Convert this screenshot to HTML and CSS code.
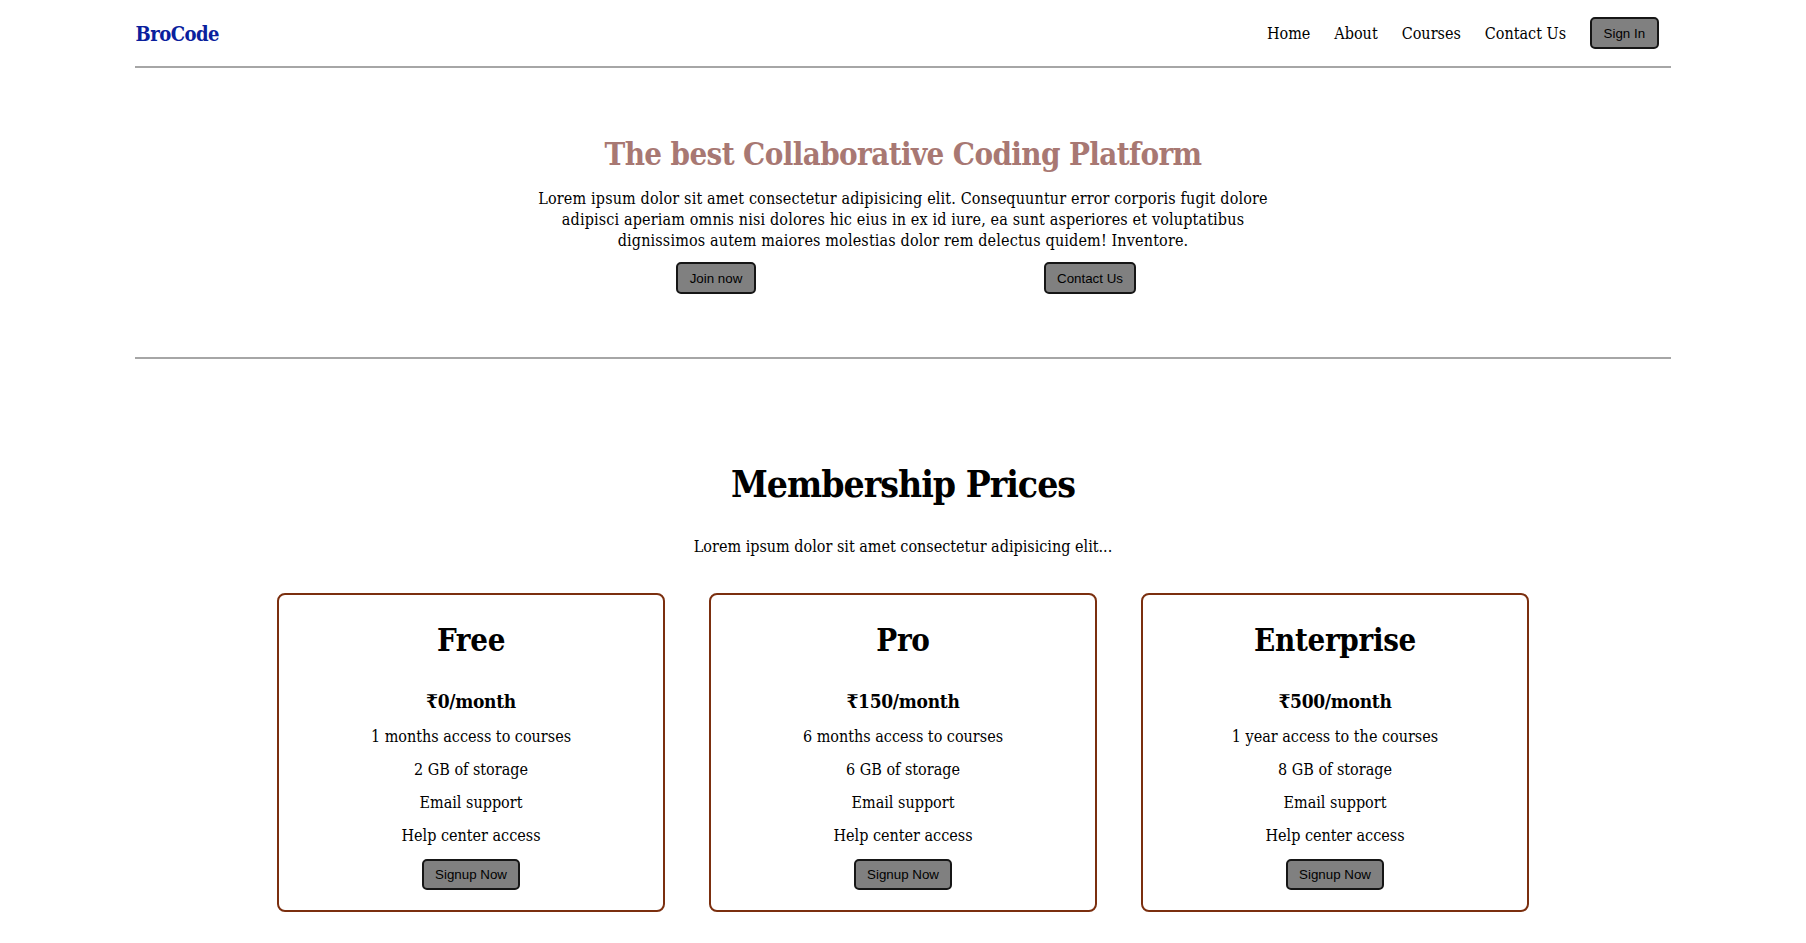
FILE: index.html
```html
<!DOCTYPE html>
<html lang="en">
<head>
<meta charset="utf-8">
<title>BroCode</title>
<link rel="stylesheet" href="styles.css">
</head>
<body>
<div class="container">
  <header class="header">
    <div class="logo">BroCode</div>
    <nav class="nav">
      <a href="#">Home</a>
      <a href="#">About</a>
      <a href="#">Courses</a>
      <a href="#">Contact Us</a>
      <button class="btn">Sign In</button>
    </nav>
  </header>

  <section class="hero">
    <h1>The best Collaborative Coding Platform</h1>
    <p>Lorem ipsum dolor sit amet consectetur adipisicing elit. Consequuntur error corporis fugit dolore adipisci aperiam omnis nisi dolores hic eius in ex id iure, ea sunt asperiores et voluptatibus dignissimos autem maiores molestias dolor rem delectus quidem! Inventore.</p>
    <div class="hero-actions">
      <button class="btn">Join now</button>
      <button class="btn">Contact Us</button>
    </div>
  </section>

  <section class="pricing">
    <h2>Membership Prices</h2>
    <p class="lead">Lorem ipsum dolor sit amet consectetur adipisicing elit...</p>
    <div class="cards">
      <div class="card">
        <h3>Free</h3>
        <p class="price">₹0/month</p>
        <ul>
          <li>1 months access to courses</li>
          <li>2 GB of storage</li>
          <li>Email support</li>
          <li>Help center access</li>
        </ul>
        <button class="btn card-btn">Signup Now</button>
      </div>
      <div class="card">
        <h3>Pro</h3>
        <p class="price">₹150/month</p>
        <ul>
          <li>6 months access to courses</li>
          <li>6 GB of storage</li>
          <li>Email support</li>
          <li>Help center access</li>
        </ul>
        <button class="btn card-btn">Signup Now</button>
      </div>
      <div class="card">
        <h3>Enterprise</h3>
        <p class="price">₹500/month</p>
        <ul>
          <li>1 year access to the courses</li>
          <li>8 GB of storage</li>
          <li>Email support</li>
          <li>Help center access</li>
        </ul>
        <button class="btn card-btn">Signup Now</button>
      </div>
    </div>
  </section>
</div>
</body>
</html>
```
FILE: styles.css
```css
body {
  margin: 0;
  font-family: "DejaVu Serif", serif;
  font-stretch: condensed;
  color: #000;
  background: #fff;
}

.container {
  width: 85%;
  margin: 0 auto;
}

.header {
  display: flex;
  justify-content: space-between;
  align-items: center;
  height: 66px;
  border-bottom: 2px solid #a6a6a6;
}

.logo {
  font-size: 20px;
  letter-spacing: -0.5px;
  font-weight: bold;
  color: #0a209d;
  padding-top: 2px;
}

.nav {
  display: flex;
  align-items: center;
  gap: 24px;
  margin-right: 12px;
}

.nav a {
  color: #000;
  text-decoration: none;
  font-size: 16px;
}

.btn {
  font-family: "Liberation Sans", Arial, sans-serif;
  font-stretch: normal;
  font-size: 13.333px;
  color: #000;
  background: #808080;
  border: 2px solid #161616;
  border-radius: 5px;
  height: 32px;
  padding: 0 11.5px;
  box-sizing: border-box;
}

.hero {
  text-align: center;
  padding: 65px 0 63px;
  border-bottom: 2px solid #a6a6a6;
}

.hero h1 {
  margin: 0;
  font-size: 31px;
  letter-spacing: -0.6px;
  line-height: 42px;
  font-weight: bold;
  color: #a87873;
}

.hero p {
  max-width: 760px;
  margin: 13px auto 0;
  font-size: 16px;
  letter-spacing: 0.15px;
  line-height: 21px;
}

.hero-actions {
  display: grid;
  grid-template-columns: 1fr 1fr;
  justify-items: center;
  width: 748px;
  margin: 11px auto 0;
}

.pricing {
  text-align: center;
  padding-top: 99px;
}

.pricing h2 {
  margin: 0;
  font-size: 37px;
  letter-spacing: -1px;
  line-height: 52px;
}

.pricing .lead {
  margin: 26px 0 0;
  font-size: 16px;
  line-height: 21px;
}

.cards {
  display: flex;
  justify-content: center;
  gap: 44px;
  margin-top: 36px;
}

.card {
  width: 388px;
  box-sizing: border-box;
  border: 2px solid #7b2f0f;
  border-radius: 8px;
  padding: 24px 0 20px;
}

.card h3 {
  margin: 0;
  font-size: 31px;
  letter-spacing: -0.3px;
  line-height: 42px;
}

.card .price {
  margin: 27px 0 0;
  font-size: 19px;
  letter-spacing: -0.3px;
  line-height: 26px;
  font-weight: bold;
}

.card ul {
  list-style: none;
  margin: 12px 0 0;
  padding: 0;
}

.card li {
  font-size: 16px;
  line-height: 21px;
  margin-bottom: 12px;
}

.card li:last-child {
  margin-bottom: 0;
}

.card-btn {
  margin-top: 13px;
  height: 31px;
}
```
